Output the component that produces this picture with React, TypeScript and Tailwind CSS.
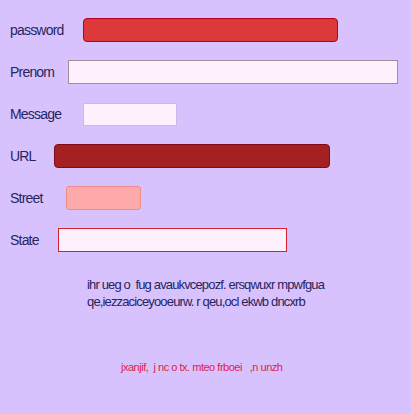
import React from "react";

const rows = [
  { label: "password", labelW: "w-[73px]", input: "w-[255px] h-[24px] bg-[#dc3a3a] border border-[#b3001b] rounded-[4px]" },
  { label: "Prenom", labelW: "w-[58px]", input: "w-[330px] h-[24px] bg-[#fff0fe] border border-[#a38b95]" },
  { label: "Message", labelW: "w-[73px]", input: "w-[94px] h-[23px] bg-[#fff0fe] border border-[#cdb9e8]" },
  { label: "URL", labelW: "w-[44px]", input: "w-[276px] h-[24px] bg-[#a52121] border border-[#7f0a18] rounded-[4px]" },
  { label: "Street", labelW: "w-[56px]", input: "w-[75px] h-[24px] bg-[#ffaaaa] border border-[#f08a8a] rounded-[3px]" },
  { label: "State", labelW: "w-[48px]", input: "w-[229px] h-[24px] bg-[#fff0fe] border border-[#d2202f]" },
];

export default function App() {
  return (
    <div className="w-[411px] h-[414px] bg-[#d8c2fd] font-['Liberation_Sans',Arial,sans-serif] overflow-hidden">
      <div className="pl-[10px] pt-[18px] flex flex-col gap-[18px]">
        {rows.map((r) => (
          <div key={r.label} className="flex items-center h-[24px]">
            <span className={`${r.labelW} shrink-0 text-[14px] tracking-[-0.8px] text-[#27255e]`}>{r.label}</span>
            <input className={`${r.input} shrink-0 outline-none`} />
          </div>
        ))}
      </div>
      <div className="ml-[87px] mt-[24px] text-[13px] leading-[17px] tracking-[-0.85px] text-[#27255e] whitespace-pre">
        <div>{"ihr ueg o  fug avaukvcepozf. ersqwuxr mpwfgua"}</div>
        <div>{"qe,iezzaciceyooeurw. r qeu,ocl ekwb dncxrb"}</div>
      </div>
      <div className="mt-[49px] pl-[121px] text-[11px] tracking-[-0.48px] text-[#e0204a] whitespace-pre">
        {"jxanjif,  j nc o tx. mteo frboei   ,n unzh"}
      </div>
    </div>
  );
}
